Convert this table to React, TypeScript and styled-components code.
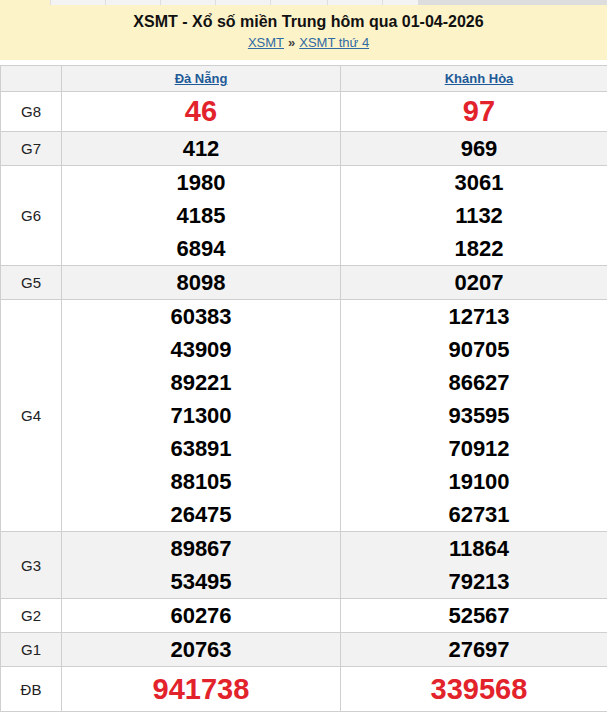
import React from "react";
import styled, { createGlobalStyle } from "styled-components";

const Global = createGlobalStyle`
  html, body { margin: 0; padding: 0; background: #fff; overflow: hidden; }
  body { font-family: "Liberation Sans", Arial, sans-serif; }
`;

const Viewport = styled.div`
  width: 607px;
  overflow: hidden;
`;

const Page = styled.div`
  width: 617px;
`;

const TabStrip = styled.div`
  display: flex;
  height: 5px;
  background: #fdf3c9;
`;

const TabGap = styled.div`
  width: 50px;
`;

const Tab = styled.div<{ $w: number }>`
  width: ${(p) => p.$w}px;
  background: #f3f3f3;
  border-left: 1px solid #dedede;
  box-sizing: border-box;
`;

const TabRest = styled.div`
  flex: 1;
  background: #dddddd;
`;

const Header = styled.div`
  background: #fdf3c9;
  padding: 6px 0 7px;
  text-align: center;
`;

const Title = styled.h1`
  margin: 0;
  font-size: 16px;
  line-height: 22px;
  font-weight: bold;
  color: #111;
`;

const Crumbs = styled.div`
  font-size: 13px;
  line-height: 20px;
  color: #333;
`;

const CrumbLink = styled.a`
  color: #2f6aa3;
  text-decoration: underline;
`;

const Sep = styled.span`
  margin: 0 4px;
  font-weight: bold;
  color: #444;
`;

const Table = styled.table`
  margin-top: 5px;
  width: 617px;
  table-layout: fixed;
  border-collapse: collapse;
`;

const HeadCell = styled.th`
  border: 1px solid #cfcfcf;
  background: #f2f2f2;
  height: 25px;
  padding: 0;
  font-size: 13px;
  font-weight: bold;
  text-align: center;
`;

const ProvinceLink = styled.a`
  color: #1d5a97;
  text-decoration: underline;
`;

const Row = styled.tr<{ $alt: boolean }>`
  background: ${(p) => (p.$alt ? "#f2f2f2" : "#fff")};
`;

const Label = styled.td`
  border: 1px solid #cfcfcf;
  padding: 0;
  text-align: center;
  font-size: 15px;
  color: #222;
`;

const Cell = styled.td`
  border: 1px solid #cfcfcf;
  padding: 0;
  text-align: center;
`;

const Num = styled.div<{ $big: boolean }>`
  font-weight: bold;
  font-size: ${(p) => (p.$big ? "29px" : "22px")};
  line-height: ${(p) => (p.$big ? "39px" : "33px")};
  color: ${(p) => (p.$big ? "#e3232b" : "#000")};
`;

const NumDB = styled(Num)`
  line-height: 44px;
`;

type Prize = { label: string; a: string[]; b: string[]; big?: boolean; db?: boolean };

const prizes: Prize[] = [
  { label: "G8", a: ["46"], b: ["97"], big: true },
  { label: "G7", a: ["412"], b: ["969"] },
  { label: "G6", a: ["1980", "4185", "6894"], b: ["3061", "1132", "1822"] },
  { label: "G5", a: ["8098"], b: ["0207"] },
  {
    label: "G4",
    a: ["60383", "43909", "89221", "71300", "63891", "88105", "26475"],
    b: ["12713", "90705", "86627", "93595", "70912", "19100", "62731"],
  },
  { label: "G3", a: ["89867", "53495"], b: ["11864", "79213"] },
  { label: "G2", a: ["60276"], b: ["52567"] },
  { label: "G1", a: ["20763"], b: ["27697"] },
  { label: "ĐB", a: ["941738"], b: ["339568"], big: true, db: true },
];

const tabs = [55, 55, 55, 55, 57, 55, 36];

function Nums({ list, big, db }: { list: string[]; big?: boolean; db?: boolean }) {
  return (
    <>
      {list.map((n, i) =>
        db ? (
          <NumDB key={i} $big={true}>
            {n}
          </NumDB>
        ) : (
          <Num key={i} $big={!!big}>
            {n}
          </Num>
        )
      )}
    </>
  );
}

export default function App() {
  return (
    <Viewport>
      <Global />
      <Page>
        <TabStrip>
          <TabGap />
          {tabs.map((w, i) => (
            <Tab key={i} $w={w} />
          ))}
          <TabRest />
        </TabStrip>
        <Header>
          <Title>XSMT - Xổ số miền Trung hôm qua 01-04-2026</Title>
          <Crumbs>
            <CrumbLink href="#">XSMT</CrumbLink>
            <Sep>»</Sep>
            <CrumbLink href="#">XSMT thứ 4</CrumbLink>
          </Crumbs>
        </Header>
        <Table>
          <colgroup>
            <col style={{ width: 61 }} />
            <col style={{ width: 279 }} />
            <col style={{ width: 277 }} />
          </colgroup>
          <thead>
            <tr>
              <HeadCell />
              <HeadCell>
                <ProvinceLink href="#">Đà Nẵng</ProvinceLink>
              </HeadCell>
              <HeadCell>
                <ProvinceLink href="#">Khánh Hòa</ProvinceLink>
              </HeadCell>
            </tr>
          </thead>
          <tbody>
            {prizes.map((p, i) => (
              <Row key={p.label} $alt={i % 2 === 1}>
                <Label>{p.label}</Label>
                <Cell>
                  <Nums list={p.a} big={p.big} db={p.db} />
                </Cell>
                <Cell>
                  <Nums list={p.b} big={p.big} db={p.db} />
                </Cell>
              </Row>
            ))}
          </tbody>
        </Table>
      </Page>
    </Viewport>
  );
}
